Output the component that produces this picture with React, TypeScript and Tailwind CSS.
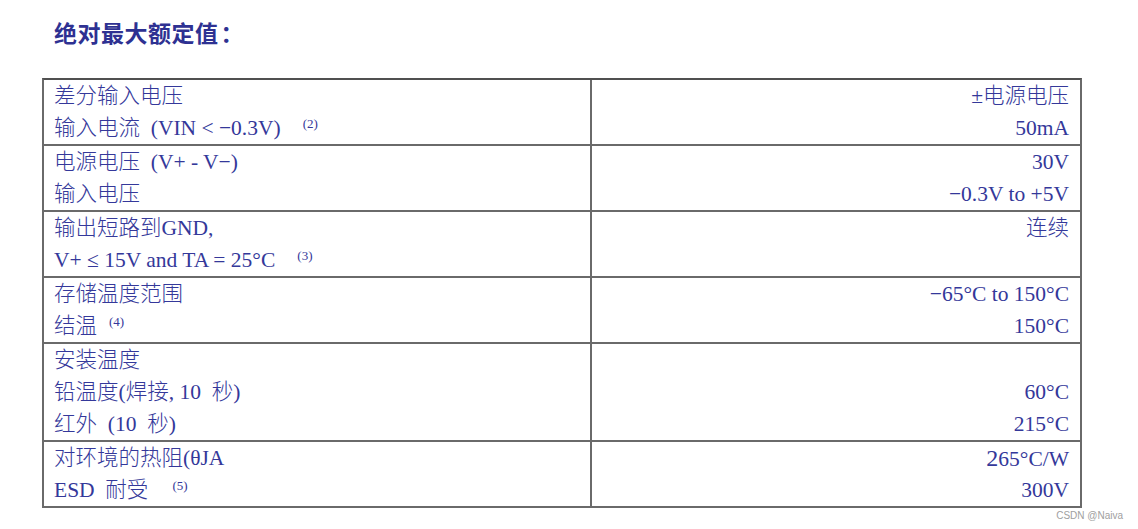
import React from "react";

type Line = { l: React.ReactNode; r?: React.ReactNode };

const Sup = ({ children, ml = "ml-[22px]" }: { children: React.ReactNode; ml?: string }) => (
  <span className={`${ml} text-[13px] relative top-[-7px]`}>{children}</span>
);

const rows: Line[][] = [
  [
    { l: "差分输入电压", r: "±电源电压" },
    { l: <>输入电流&nbsp;&nbsp;(VIN &lt; −0.3V)<Sup>(2)</Sup></>, r: "50mA" },
  ],
  [
    { l: "电源电压\u00a0\u00a0(V+ - V−)", r: "30V" },
    { l: "输入电压", r: "−0.3V to +5V" },
  ],
  [
    { l: "输出短路到GND,", r: "连续" },
    { l: <>V+ ≤ 15V and TA = 25°C<Sup>(3)</Sup></> },
  ],
  [
    { l: "存储温度范围", r: "−65°C to 150°C" },
    { l: <>结温<Sup ml="ml-[12px]">(4)</Sup></>, r: "150°C" },
  ],
  [
    { l: "安装温度" },
    { l: "铅温度(焊接, 10\u00a0\u00a0秒)", r: "60°C" },
    { l: "红外\u00a0\u00a0(10\u00a0\u00a0秒)", r: "215°C" },
  ],
  [
    { l: "对环境的热阻(θJA", r: <><span className="text-[24px]">2</span>65°C/W</> },
    { l: <>ESD&nbsp;&nbsp;耐受<Sup ml="ml-[24px]">(5)</Sup></>, r: "300V" },
  ],
];

export default function App() {
  return (
    <div
      className="relative w-[1138px] h-[529px] bg-white overflow-hidden"
      style={{ fontFamily: '"Liberation Serif", "Noto Sans CJK SC", serif' }}
    >
      <div
        className="pl-[54px] pt-[18px] h-[78px] text-[23px] leading-[28px] font-bold text-[#2e3192] tracking-[0.5px]"
        style={{ fontFamily: '"Noto Sans CJK SC", sans-serif' }}
      >
        绝对最大额定值<span className="ml-[2px]">：</span>
      </div>
      <div className="ml-[42px] w-[1040px] border-2 border-[#6a6a6a] border-t-[#505050] text-[21.5px] leading-[32px] text-[#34389a]">
        {rows.map((row, i) => (
          <div key={i} className={`flex ${i > 0 ? "border-t-2 border-[#6a6a6a]" : ""}`}>
            <div className="w-[548px] shrink-0 border-r-2 border-[#6a6a6a] pl-[10px] font-light">
              {row.map((ln, j) => (
                <div key={j} className="h-[32px] whitespace-nowrap">
                  {ln.l}
                </div>
              ))}
            </div>
            <div className="flex-1 pr-[11px] text-right font-light">
              {row.map((ln, j) => (
                <div key={j} className="h-[32px] whitespace-nowrap">
                  {ln.r ?? ""}
                </div>
              ))}
            </div>
          </div>
        ))}
      </div>
      <div
        className="absolute right-[15px] top-[509px] text-[10px] leading-[14px] text-[#a0a0a0]"
        style={{ fontFamily: '"Liberation Sans", Arial, sans-serif' }}
      >
        CSDN @Naiva
      </div>
    </div>
  );
}
